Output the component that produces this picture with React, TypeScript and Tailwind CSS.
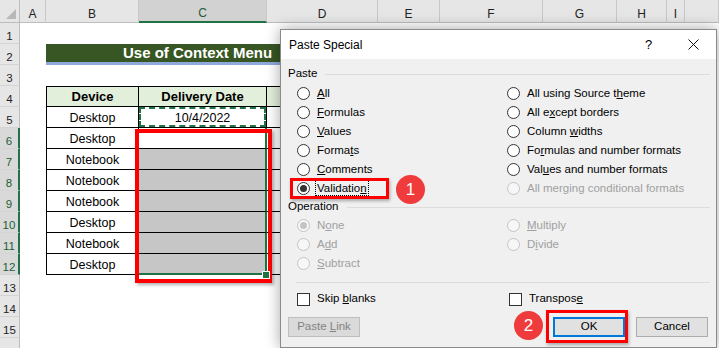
import React from 'react';
import clsx from 'clsx';

// column tracks: row-header, A, B, C, D, E, F, G, H, I, rest
const HEAD_ROW = 'grid grid-cols-[20px_26px_93px_128px_111px_62px_103px_74px_50px_18px_1fr] grid-rows-[23px] h-[23px]';
const ROW = 'grid grid-cols-[20px_26px_93px_128px_111px_62px_103px_74px_50px_18px_1fr] grid-rows-[21px] h-[21px]';

const LETTERS = ['A', 'B', 'C', 'D', 'E', 'F', 'G', 'H', 'I', ''];

const DEVICES = ['Desktop', 'Desktop', 'Notebook', 'Notebook', 'Notebook', 'Desktop', 'Notebook', 'Desktop'];

const RowHeader = ({ n }: { n: number }) => {
  const selected = n >= 6 && n <= 12;
  return (
    <div
      className={clsx(
        'flex items-center justify-center pt-[6px] leading-[14px] text-[11.5px] border-b border-b-[#d4d4d4]',
        selected
          ? 'bg-[#d9d9d9] text-[#1d5e36] border-r-2 border-r-[#217346]'
          : 'bg-[#e6e6e6] text-[#222] border-r border-r-[#bdbdbd]'
      )}
    >
      {n < 16 ? n : ''}
    </div>
  );
};

const SheetRow = ({ n }: { n: number }) => {
  if (n === 2) {
    return (
      <div className={ROW}>
        <RowHeader n={n} />
        <div />
        <div className="col-span-8 bg-[#375623] border-b-[3px] border-[#8eaadb] text-white font-bold text-[15px] leading-[18px] whitespace-nowrap overflow-hidden pl-[77px] flex items-center">
          Use of Context Menu
        </div>
        <div />
      </div>
    );
  }

  if (n === 4) {
    return (
      <div className={ROW}>
        <RowHeader n={n} />
        <div />
        <div className="bg-[#e2efda] border border-black flex items-center justify-center font-bold text-[13px] leading-[16px]">
          Device
        </div>
        <div className="bg-[#e2efda] border-y border-r border-black flex items-center justify-center font-bold text-[13px] leading-[16px]">
          Delivery Date
        </div>
        <div className="bg-[#e2efda] border-y border-r border-black" />
        <div />
      </div>
    );
  }

  if (n >= 5 && n <= 12) {
    const device = DEVICES[n - 5];
    return (
      <div className={ROW}>
        <RowHeader n={n} />
        <div />
        <div className="border-x border-b border-black flex items-center justify-center pt-[2px] text-[12.5px] leading-[16px]">
          {device}
        </div>
        {n === 5 ? (
          <div className="relative border-r border-b border-black flex items-center justify-center pt-[2px] text-[12.5px] leading-[16px]">
            10/4/2022
            <div className="absolute inset-0 border-2 border-dashed border-[#217346]" />
          </div>
        ) : (
          <div
            className={clsx(
              'border-r-2 border-r-[#217346]',
              n === 12 ? 'border-b-2 border-b-[#217346]' : 'border-b border-b-black',
              n === 6 ? 'bg-white' : 'bg-[#c6c6c6]'
            )}
          />
        )}
        <div className="border-r border-b border-black" />
        <div />
      </div>
    );
  }

  return (
    <div className={ROW}>
      <RowHeader n={n} />
    </div>
  );
};

const Radio = ({
  children,
  checked = false,
  disabled = false,
}: {
  children?: React.ReactNode;
  checked?: boolean;
  disabled?: boolean;
}) => {
  if (!children) return <div className="h-[19px]" />;
  return (
    <div className={clsx('flex items-center h-[19px]', disabled ? 'text-[#a0a0a0]' : 'text-black')}>
      <span
        className={clsx(
          'w-[13px] h-[13px] rounded-full border flex items-center justify-center shrink-0',
          disabled ? 'border-[#c4c4c4] bg-[#f7f7f7]' : 'border-[#333] bg-white'
        )}
      >
        {checked && <span className={clsx('w-[7px] h-[7px] rounded-full', disabled ? 'bg-[#c4c4c4]' : 'bg-[#333]')} />}
      </span>
      <span className="ml-[7px] whitespace-nowrap">{children}</span>
    </div>
  );
};

const Checkbox = ({ children }: { children: React.ReactNode }) => (
  <div className="flex items-center h-[18px]">
    <span className="w-[13px] h-[13px] border border-[#333] bg-white shrink-0" />
    <span className="ml-[7px] whitespace-nowrap">{children}</span>
  </div>
);

const GroupHeader = ({ label, h }: { label: string; h: string }) => (
  <div className={clsx('flex items-center', h)}>
    <span>{label}</span>
    <div className="flex-1 h-px bg-[#dcdcdc] ml-[8px]" />
  </div>
);

const PasteSpecialDialog = () => (
  <div className="absolute left-[280px] top-[29px] w-[437px] h-[319px] border border-[#8a8a8a] bg-[#f0f0f0] shadow-[0_0_14px_rgba(0,0,0,0.35)] flex flex-col text-[11.5px] text-black">
    <div className="h-[29px] bg-white flex items-center shrink-0">
      <span className="pl-[8px] text-[12px]">Paste Special</span>
      <div className="ml-auto flex h-full">
        <div className="w-[45px] flex items-center justify-center text-[13px]">?</div>
        <div className="w-[45px] flex items-center justify-center">
          <svg width="11" height="11" viewBox="0 0 11 11">
            <path d="M0.5 0.5 L10.5 10.5 M10.5 0.5 L0.5 10.5" stroke="#111" strokeWidth="1" />
          </svg>
        </div>
      </div>
    </div>

    <div className="flex-1 flex flex-col pl-[7px] pr-[6px] pt-[5px]">
      <GroupHeader label="Paste" h="h-[20px]" />
      <div className="grid grid-cols-[210px_1fr] pl-[9px]">
        <Radio><u>A</u>ll</Radio>
        <Radio>All using Source t<u>h</u>eme</Radio>
        <Radio><u>F</u>ormulas</Radio>
        <Radio>All e<u>x</u>cept borders</Radio>
        <Radio><u>V</u>alues</Radio>
        <Radio>Column <u>w</u>idths</Radio>
        <Radio>Forma<u>t</u>s</Radio>
        <Radio>Fo<u>r</u>mulas and number formats</Radio>
        <Radio><u>C</u>omments</Radio>
        <Radio>Val<u>u</u>es and number formats</Radio>
        <Radio checked>
          <span className="border border-dotted border-black px-[1px] -ml-[2px] leading-[14px] inline-block">
            Validatio<u>n</u>
          </span>
        </Radio>
        <Radio disabled>All mer<u>g</u>ing conditional formats</Radio>
      </div>

      <GroupHeader label="Operation" h="h-[18px]" />
      <div className="grid grid-cols-[210px_1fr] pl-[9px]">
        <Radio checked disabled>N<u>o</u>ne</Radio>
        <Radio disabled><u>M</u>ultiply</Radio>
        <Radio disabled>A<u>d</u>d</Radio>
        <Radio disabled>D<u>i</u>vide</Radio>
        <Radio disabled><u>S</u>ubtract</Radio>
        <Radio />
      </div>

      <div className="mt-[9px] ml-[8px] h-px bg-[#dcdcdc]" />

      <div className="mt-[7px] grid grid-cols-[212px_1fr] pl-[9px]">
        <Checkbox>Skip <u>b</u>lanks</Checkbox>
        <Checkbox>Transpos<u>e</u></Checkbox>
      </div>

      <div className="mt-[9px] flex h-[20px] pr-[2px]">
        <div className="w-[72px] h-full bg-[#dadada] border border-[#bfbfbf] text-[#838383] flex items-center justify-center">
          <span>Paste <u>L</u>ink</span>
        </div>
        <div className="ml-auto w-[72px] h-full bg-[#e1e1e1] border-2 border-[#0078d7] flex items-center justify-center">OK</div>
        <div className="ml-[11px] w-[72px] h-full bg-[#e1e1e1] border border-[#adadad] flex items-center justify-center">Cancel</div>
      </div>
    </div>
  </div>
);

const Badge = ({ n, className }: { n: number; className: string }) => (
  <div
    className={clsx(
      'absolute w-[29px] h-[29px] rounded-full bg-[#ef3b3b] text-white text-[17px] flex items-center justify-center',
      className
    )}
  >
    {n}
  </div>
);

export default function App() {
  return (
    <div className="relative w-[719px] h-[348px] overflow-hidden bg-white font-['Liberation_Sans',Arial,sans-serif] text-black">
      {/* column headers */}
      <div className={`${HEAD_ROW} bg-[#e6e6e6]`}>
        <div className="relative border-r border-b border-[#bdbdbd]">
          <svg className="absolute right-[3px] bottom-[3px]" width="10" height="10" viewBox="0 0 10 10">
            <polygon points="10,0 10,10 0,10" fill="#b8b8b8" />
          </svg>
        </div>
        {LETTERS.map((l, i) => (
          <div
            key={i}
            className={clsx(
              'flex items-center justify-center pt-[5px] leading-[14px] text-[12px] border-r border-r-[#c8c8c8]',
              l === 'C' ? 'bg-[#d2d2d2] text-[#1d5e36] border-b-2 border-b-[#217346]' : 'border-b border-b-[#bdbdbd] text-[#222]'
            )}
          >
            {l}
          </div>
        ))}
      </div>

      {Array.from({ length: 16 }, (_, i) => (
        <SheetRow key={i} n={i + 1} />
      ))}

      {/* red highlight around the selected range, fill handle */}
      <div className="absolute left-[135px] top-[129px] w-[137px] h-[154px] border-[4px] border-[#ff0000] shadow-[2px_2px_3px_rgba(0,0,0,0.3)]" />
      <div className="absolute left-[263px] top-[272px] w-[6px] h-[6px] bg-[#217346] outline outline-1 outline-white" />

      <PasteSpecialDialog />

      <div className="absolute left-[290px] top-[178px] w-[99px] h-[21px] border-[3px] border-[#ff0000] shadow-[1px_2px_3px_rgba(0,0,0,0.3)]" />
      <Badge n={1} className="left-[396px] top-[175px]" />

      <div className="absolute left-[546px] top-[310px] w-[82px] h-[33px] border-[3px] border-[#ff0000] shadow-[1px_2px_3px_rgba(0,0,0,0.3)]" />
      <Badge n={2} className="left-[514px] top-[311px]" />
    </div>
  );
}
